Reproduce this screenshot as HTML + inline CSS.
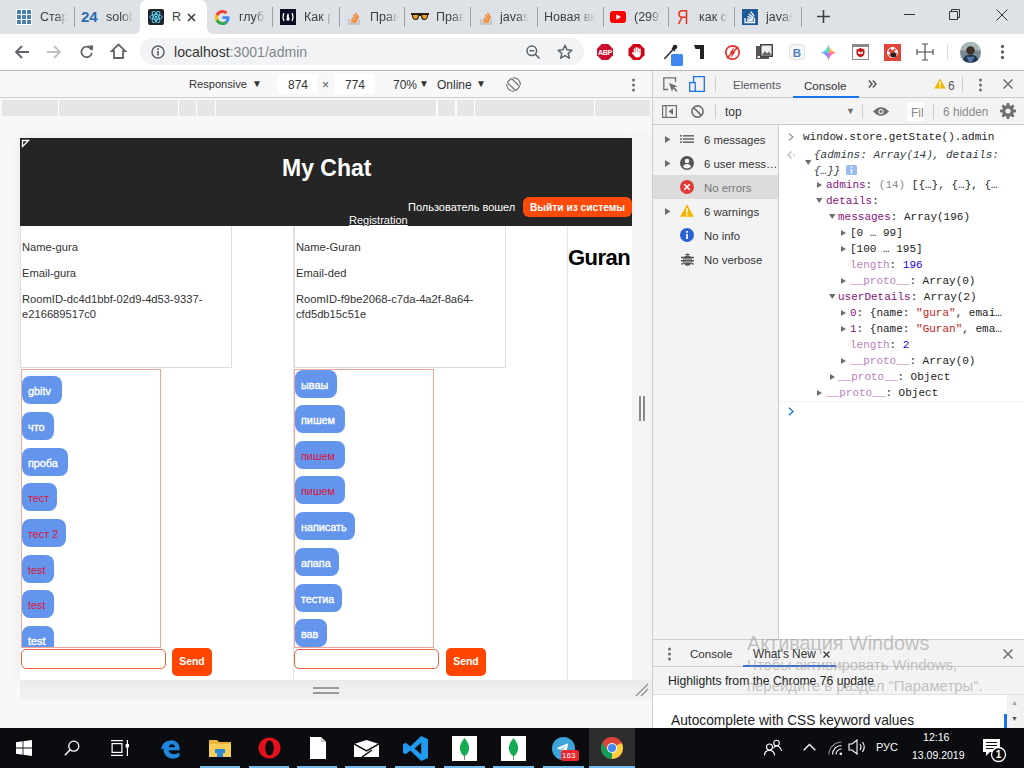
<!DOCTYPE html>
<html><head><meta charset="utf-8">
<style>
*{box-sizing:border-box;margin:0;padding:0}
html,body{width:1024px;height:768px;overflow:hidden;background:#fff;font-family:"Liberation Sans",sans-serif;font-size:12px;color:#333}
.a{position:absolute}
.t{position:absolute;white-space:nowrap;line-height:1}
.mono{font-family:"Liberation Mono",monospace}
/* tab strip */
#tabs{left:0;top:0;width:1024px;height:34px;background:#dee1e6}
.tsep{position:absolute;top:7px;width:1px;height:20px;background:#9aa0a6}
.ttl{position:absolute;top:11px;font-size:12.5px;color:#3c4043;white-space:nowrap;overflow:hidden;line-height:13px}
.fade{-webkit-mask-image:linear-gradient(to right,#000 60%,transparent)}

.bub{position:absolute;left:0;height:28px;background:#6495ed;border-radius:8px;color:#fff;font-size:10.8px;font-weight:normal;-webkit-text-stroke:0.35px #fff;line-height:30px;padding-left:6px;white-space:nowrap}
.bub.r{color:#dc143c;font-weight:normal;-webkit-text-stroke:0}
.send{position:absolute;width:40px;height:28px;background:#ff4500;border-radius:5px;color:#fff;font-size:10.4px;font-weight:bold;line-height:28px;text-align:center}

.sbi{position:absolute;left:653px;width:125px;height:14px;padding-left:51px;font-size:11.4px;color:#333;line-height:14px;white-space:nowrap}
.sbi .tri{position:absolute;left:11px;top:0;font-size:8px;color:#6e6e6e}
.cl{position:absolute;font-family:"Liberation Mono",monospace;font-size:11px;line-height:14px;white-space:nowrap;color:#222}
.ctri{position:absolute;font-size:8px;color:#6e6e6e;line-height:12px}
.pn{color:#881280}.pl{color:#bb7fbb}.nm{color:#1c00cf}.st{color:#c41a16}
</style></head><body>

<!-- ============ TAB STRIP ============ -->
<div id="tabs" class="a">
  <!-- tab1 grid -->
  <svg class="a" style="left:16px;top:9px" width="16" height="16" viewBox="0 0 16 16">
    <rect width="16" height="16" fill="#fff"/>
    <g fill="#4a7fb0">
    <rect x="1" y="1" width="4" height="4"/><rect x="6" y="1" width="4" height="4"/><rect x="11" y="1" width="4" height="4"/>
    <rect x="1" y="6" width="4" height="4"/><rect x="6" y="6" width="4" height="4"/><rect x="11" y="6" width="4" height="4"/>
    <rect x="1" y="11" width="4" height="4"/><rect x="6" y="11" width="4" height="4"/><rect x="11" y="11" width="4" height="4"/>
    </g>
  </svg>
  <div class="ttl fade" style="left:40px;width:27px">Стар</div>
  <div class="tsep" style="left:74px"></div>
  <div class="t" style="left:81px;top:9px;font-size:15px;font-weight:bold;color:#2a6db0">24</div>
  <div class="ttl fade" style="left:106px;width:27px">solob</div>
  <!-- active tab -->
  <div class="a" style="left:134px;top:28px;width:6px;height:6px;background:#fff"></div>
  <div class="a" style="left:134px;top:28px;width:6px;height:6px;background:#dee1e6;border-bottom-right-radius:6px"></div>
  <div class="a" style="left:207px;top:28px;width:6px;height:6px;background:#fff"></div>
  <div class="a" style="left:207px;top:28px;width:6px;height:6px;background:#dee1e6;border-bottom-left-radius:6px"></div>
  <div class="a" style="left:140px;top:0;width:67px;height:34px;background:#fff;border-radius:7px 7px 0 0"></div>
  <svg class="a" style="left:148px;top:9px" width="16" height="16" viewBox="0 0 16 16">
    <rect width="16" height="16" rx="2" fill="#20232a"/>
    <g fill="none" stroke="#61dafb" stroke-width="0.9">
      <ellipse cx="8" cy="8" rx="6.2" ry="2.4"/>
      <ellipse cx="8" cy="8" rx="6.2" ry="2.4" transform="rotate(60 8 8)"/>
      <ellipse cx="8" cy="8" rx="6.2" ry="2.4" transform="rotate(120 8 8)"/>
    </g>
    <circle cx="8" cy="8" r="1.3" fill="#61dafb"/>
  </svg>
  <div class="ttl" style="left:172px;width:10px">R</div>
  <svg class="a" style="left:187px;top:13px" width="9" height="9" viewBox="0 0 9 9"><path d="M1 1L8 8M8 1L1 8" stroke="#3c4043" stroke-width="1.6"/></svg>
  <!-- tab4 google -->
  <svg class="a" style="left:215px;top:10px" width="15" height="15" viewBox="0 0 16 16">
    <path d="M15.5 8.2c0-.6-.1-1.1-.2-1.6H8v3h4.2c-.2 1-.8 1.8-1.6 2.3v2h2.6c1.5-1.4 2.3-3.4 2.3-5.7z" fill="#4285f4"/>
    <path d="M8 16c2.2 0 4-.7 5.3-2l-2.6-2c-.7.5-1.6.8-2.7.8-2.1 0-3.9-1.4-4.5-3.3H.8v2.1C2.1 14.2 4.8 16 8 16z" fill="#34a853"/>
    <path d="M3.5 9.5C3.3 9 3.2 8.5 3.2 8s.1-1 .3-1.5V4.4H.8C.3 5.5 0 6.7 0 8s.3 2.5.8 3.6l2.7-2.1z" fill="#fbbc05"/>
    <path d="M8 3.2c1.2 0 2.2.4 3.1 1.2l2.3-2.3C12 .8 10.2 0 8 0 4.8 0 2.1 1.8.8 4.4l2.7 2.1C4.1 4.6 5.9 3.2 8 3.2z" fill="#ea4335"/>
  </svg>
  <div class="ttl fade" style="left:239px;width:26px">глуб</div>
  <div class="tsep" style="left:272px"></div>
  <!-- tab5 freecodecamp -->
  <svg class="a" style="left:280px;top:9px" width="16" height="16" viewBox="0 0 16 16">
    <rect width="16" height="16" fill="#0a0a23"/>
    <path d="M4 4Q2 8 4 12M12 4Q14 8 12 12" stroke="#fff" stroke-width="1.2" fill="none"/>
    <path d="M8 4Q6 7 7 9Q6 9 6.5 11Q8 12.5 9.5 11Q10 9 8.8 8Q9.5 6 8 4z" fill="#fff"/>
  </svg>
  <div class="ttl fade" style="left:304px;width:28px">Как р</div>
  <div class="tsep" style="left:339px"></div>
  <!-- tab6 SO -->
  <svg class="a" style="left:347px;top:9px" width="15" height="16" viewBox="0 0 15 16">
    <path d="M2 10v5h10v-5" stroke="#bcbbbb" stroke-width="1.4" fill="none"/>
    <g stroke="#f48024" stroke-width="1.4"><path d="M4 13h6"/><path d="M4.2 10.8l5.9 1.1"/><path d="M5 8.3l5.4 2.4"/><path d="M6.4 5.9l4.6 3.7"/><path d="M8.4 3.8l3.4 4.8"/></g>
  </svg>
  <div class="ttl fade" style="left:370px;width:28px">Прав</div>
  <div class="tsep" style="left:404px"></div>
  <!-- tab7 glasses -->
  <svg class="a" style="left:411px;top:12px" width="18" height="10" viewBox="0 0 18 10">
    <path d="M0 1h18v2h-1c0 4-2 5-4 5s-3-2-3-4H8c0 2-1 4-3 4S1 7 1 3H0z" fill="#2a2010"/>
    <path d="M2 3h5c0 3-1 4-2.5 4S2 5 2 3zM11 3h5c0 3-1 4-2.5 4S11 5 11 3z" fill="#e8a020"/>
  </svg>
  <div class="ttl fade" style="left:436px;width:28px">Прав</div>
  <div class="tsep" style="left:470px"></div>
  <!-- tab8 SO -->
  <svg class="a" style="left:479px;top:9px" width="15" height="16" viewBox="0 0 15 16">
    <path d="M2 10v5h10v-5" stroke="#bcbbbb" stroke-width="1.4" fill="none"/>
    <g stroke="#f48024" stroke-width="1.4"><path d="M4 13h6"/><path d="M4.2 10.8l5.9 1.1"/><path d="M5 8.3l5.4 2.4"/><path d="M6.4 5.9l4.6 3.7"/><path d="M8.4 3.8l3.4 4.8"/></g>
  </svg>
  <div class="ttl fade" style="left:500px;width:29px">javas</div>
  <div class="tsep" style="left:537px"></div>
  <div class="ttl fade" style="left:544px;width:52px">Новая вкл</div>
  <div class="tsep" style="left:603px"></div>
  <!-- youtube -->
  <svg class="a" style="left:610px;top:11px" width="16" height="12" viewBox="0 0 16 12">
    <rect width="16" height="12" rx="3" fill="#f00"/><path d="M6.3 3.2v5.6L11 6z" fill="#fff"/>
  </svg>
  <div class="ttl fade" style="left:634px;width:27px">(299)</div>
  <div class="tsep" style="left:668px"></div>
  <div class="t" style="left:677px;top:7px;font-size:20px;color:#e8321a;transform:scaleX(.8);transform-origin:left top">Я</div>
  <div class="ttl fade" style="left:699px;width:29px">как с</div>
  <div class="tsep" style="left:734px"></div>
  <!-- SO blue -->
  <svg class="a" style="left:742px;top:9px" width="16" height="16" viewBox="0 0 16 16"><rect width="16" height="16" fill="#1e5a96"/><path d="M3 9v4.5h9.5V9" stroke="#fff" stroke-width="1.3" fill="none"/><g stroke="#fff" stroke-width="1.3"><path d="M4.8 11.8h6"/><path d="M5 9.8l5.8 1"/><path d="M5.6 7.4l5.4 2.4"/><path d="M6.8 4.9l4.7 3.8"/><path d="M8.8 2.6l3.4 4.8"/></g></svg>
  <div class="ttl fade" style="left:766px;width:27px">javas</div>
  <div class="tsep" style="left:801px"></div>
  <svg class="a" style="left:817px;top:10px" width="13" height="13" viewBox="0 0 13 13"><path d="M6.5 0v13M0 6.5h13" stroke="#3c4043" stroke-width="1.6"/></svg>
  <!-- window controls -->
  <div class="a" style="left:904px;top:14px;width:11px;height:1px;background:#333"></div>
  <svg class="a" style="left:949px;top:9px" width="11" height="11" viewBox="0 0 11 11"><path d="M.5 2.5h8v8h-8zM2.5 2.5v-2h8v8h-2" stroke="#333" fill="none"/></svg>
  <svg class="a" style="left:996px;top:9px" width="12" height="12" viewBox="0 0 12 12"><path d="M.5 .5l11 11M11.5 .5l-11 11" stroke="#333" stroke-width="1"/></svg>
</div>

<!-- ============ TOOLBAR ============ -->
<div class="a" style="left:0;top:34px;width:1024px;height:36px;background:#fff"></div>
<div class="a" style="left:0;top:70px;width:1024px;height:1px;background:#b8b8b8"></div>

<!-- back -->
<svg class="a" style="left:15px;top:45px" width="14" height="14" viewBox="0 0 14 14"><path d="M7 1L1 7l6 6M1 7h13" stroke="#5f6368" stroke-width="1.8" fill="none"/></svg>
<svg class="a" style="left:47px;top:45px" width="14" height="14" viewBox="0 0 14 14"><path d="M7 1l6 6-6 6M13 7H0" stroke="#bdc1c6" stroke-width="1.8" fill="none"/></svg>
<svg class="a" style="left:79px;top:44px" width="15" height="15" viewBox="0 0 16 16"><path d="M13.2 6.2A5.6 5.6 0 1 0 13.6 9.5" stroke="#5f6368" stroke-width="1.9" fill="none"/><path d="M9.5 1.5L15 1.5 15 7z" fill="#5f6368"/></svg>
<svg class="a" style="left:110px;top:43px" width="17" height="16" viewBox="0 0 17 16"><path d="M8.5 1.5L1.5 8.2H4V15h9V8.2h2.5z" stroke="#5f6368" stroke-width="1.8" fill="none" stroke-linejoin="miter"/></svg>
<!-- omnibox -->
<div class="a" style="left:140px;top:38px;width:444px;height:27px;border-radius:13.5px;background:#f1f3f4"></div>
<svg class="a" style="left:151px;top:45px" width="14" height="14" viewBox="0 0 14 14"><circle cx="7" cy="7" r="6" stroke="#5f6368" stroke-width="1.5" fill="none"/><rect x="6.2" y="6" width="1.7" height="4.5" fill="#5f6368"/><rect x="6.2" y="3.3" width="1.7" height="1.7" fill="#5f6368"/></svg>
<div class="t" style="left:174px;top:45px;font-size:14.1px;color:#333">localhost<span style="color:#80868b">:3001/admin</span></div>
<svg class="a" style="left:526px;top:45px" width="14" height="14" viewBox="0 0 14 14"><circle cx="5.8" cy="5.8" r="4.8" stroke="#5f6368" stroke-width="1.5" fill="none"/><path d="M3.5 5.8h4.6M9.3 9.3L13.5 13.5" stroke="#5f6368" stroke-width="1.5"/></svg>
<svg class="a" style="left:557px;top:44px" width="16" height="15" viewBox="0 0 16 15"><path d="M8 1.3l2 4.5 4.9.4-3.7 3.2 1.1 4.8L8 11.7l-4.3 2.5 1.1-4.8L1.1 6.2 6 5.8z" stroke="#5f6368" stroke-width="1.5" fill="none" stroke-linejoin="round"/></svg>
<!-- extensions -->
<svg class="a" style="left:597px;top:44px" width="16" height="16" viewBox="0 0 16 16"><path d="M4.7 0h6.6L16 4.7v6.6L11.3 16H4.7L0 11.3V4.7z" fill="#c8102e"/><text x="8" y="10.8" font-size="7" font-weight="bold" fill="#fff" text-anchor="middle" font-family="Liberation Sans" letter-spacing="-0.3">ABP</text></svg>
<svg class="a" style="left:628px;top:44px" width="17" height="16" viewBox="0 0 16 16"><path d="M4.7 0h6.6L16 4.7v6.6L11.3 16H4.7L0 11.3V4.7z" fill="#d0021b"/><g fill="#fff"><rect x="5.3" y="4.2" width="1.5" height="6" rx=".75"/><rect x="7.1" y="3" width="1.5" height="7" rx=".75"/><rect x="8.9" y="3.4" width="1.5" height="6.6" rx=".75"/><rect x="10.7" y="4.6" width="1.5" height="5.6" rx=".75"/><path d="M5.3 8.5h6.9v1.8q0 3-3.3 3.3-2 0-3-1.6L3.4 9.2q-.3-.8.5-1 .6-.1 1 .4l.4.6z"/></g></svg>
<svg class="a" style="left:662px;top:43px" width="22" height="23" viewBox="0 0 22 23"><path d="M2.8 15.5L11 6.5" stroke="#333" stroke-width="1.6" stroke-linecap="round"/><path d="M9.5 5.5l3 3 1.2-1.2-3-3z" fill="#222"/><circle cx="13" cy="4" r="2.3" fill="#222"/><rect x="9" y="11" width="12" height="12" rx="1.5" fill="#3f86f0"/></svg>
<svg class="a" style="left:694px;top:45px" width="11" height="14" viewBox="0 0 11 14"><path d="M0 0h10v14H6V4H1.5z" fill="#222"/></svg>
<svg class="a" style="left:724px;top:44px" width="17" height="17" viewBox="0 0 16 16"><circle cx="8" cy="8" r="6.3" stroke="#e0302a" stroke-width="1.6" fill="none"/><path d="M9.6 2.5L5.3 8.6h2.4L6.3 13.5l4.5-6.2H8.3z" fill="#e0302a"/><path d="M2.5 13.5L13.5 2.5" stroke="#e0302a" stroke-width="1.4"/></svg>
<svg class="a" style="left:756px;top:44px" width="17" height="17" viewBox="0 0 17 17"><rect x="0" y="2" width="13" height="13" fill="#555"/><rect x="4" y="0" width="13" height="13" fill="#444"/><rect x="5.5" y="1.5" width="10" height="10" fill="#eee"/><path d="M5.5 11.5L9 7l2 2.5 2-2 2.5 4z" fill="#666"/><rect x="1.5" y="12" width="2.5" height="2" fill="#eee"/></svg>
<svg class="a" style="left:789px;top:44px" width="16" height="16" viewBox="0 0 16 16"><rect x="0.5" y="0.5" width="15" height="15" rx="2.5" fill="#f4f6f9" stroke="#dfe3ea"/><text x="8" y="12.6" font-size="11.5" font-weight="bold" fill="#5181b8" text-anchor="middle" font-family="Liberation Sans">B</text></svg>
<svg class="a" style="left:820px;top:44px" width="17" height="17" viewBox="0 0 17 17"><path d="M8.5 .5Q9.8 6.5 8.5 8.5 7.2 6.5 8.5 .5z" fill="#ffd23f"/><path d="M8.5 .5Q10 7 16.5 8.5 10.5 9.5 8.5 8.5z" fill="#ffb347"/><path d="M16.5 8.5Q10 10 8.5 16.5 7.5 10.5 8.5 8.5z" fill="#ff6fb5"/><path d="M8.5 16.5Q7 10 .5 8.5 6.5 7.5 8.5 8.5z" fill="#7a8cff"/><path d="M.5 8.5Q7 7 8.5 .5 9.5 6.5 8.5 8.5z" fill="#4fd8e8"/></svg>
<svg class="a" style="left:852px;top:44px" width="17" height="16" viewBox="0 0 17 16"><rect x="0.5" y="0.5" width="16" height="15" fill="#fafafa" stroke="#8a8a8a"/><rect x="1" y="1" width="15" height="2" fill="#8a8a8a"/><path d="M4.5 5.5l4 -1.5 4 1.5v3.3q0 3-4 4.5-4-1.5-4-4.5z" fill="#c01818"/><path d="M6.3 6.8l2.2 2 2.2-2v3.2h-4.4z" fill="#fff"/></svg>
<svg class="a" style="left:884px;top:44px" width="17" height="17" viewBox="0 0 17 17"><rect width="17" height="17" fill="#e0453a"/><circle cx="8.5" cy="8.5" r="5" stroke="#fff" stroke-width="1" fill="none"/><circle cx="8.5" cy="4.5" r="1.6" fill="#fff"/><circle cx="4.5" cy="9" r="1.6" fill="#fff"/><circle cx="12" cy="7.5" r="1.6" fill="#fff"/><ellipse cx="9.5" cy="11" rx="2.8" ry="2.5" fill="#222"/></svg>
<svg class="a" style="left:916px;top:43px" width="18" height="18" viewBox="0 0 18 18"><path d="M9 1v16M1 9h16M6 1h6M6 17h6M1 6v6M17 6v6" stroke="#444" stroke-width="1.1" fill="none"/></svg>
<div class="a" style="left:947px;top:44px;width:1px;height:16px;background:#dadce0"></div>
<svg class="a" style="left:960px;top:42px" width="21" height="21" viewBox="0 0 20 20"><defs><clipPath id="avc"><circle cx="10" cy="10" r="10"/></clipPath></defs><g clip-path="url(#avc)"><rect width="20" height="20" fill="#7a8a90"/><rect y="0" width="20" height="8" fill="#a9b8b8"/><circle cx="10" cy="8" r="4" fill="#3a3028"/><path d="M2 20q1-8 8-8t8 8z" fill="#22344a"/><path d="M6 14l3 6h2l3-6" fill="#5078a8"/></g></svg>
<svg class="a" style="left:1000px;top:44px" width="5" height="16" viewBox="0 0 5 16"><circle cx="2.5" cy="2.5" r="1.7" fill="#5f6368"/><circle cx="2.5" cy="8" r="1.7" fill="#5f6368"/><circle cx="2.5" cy="13.5" r="1.7" fill="#5f6368"/></svg>


<!-- ============ DEVICE TOOLBAR + VIEWPORT ============ -->
<div class="a" style="left:0;top:71px;width:652px;height:657px;background:#f8f8f8"></div>
<div class="a" style="left:0;top:71px;width:652px;height:26px;background:#f8f8f8"></div>
<div class="a" style="left:0;top:97px;width:652px;height:1px;background:#cdcdcd"></div>
<div class="t" style="left:189px;top:79px;font-size:11.1px;color:#333">Responsive</div>
<div class="t" style="left:252px;top:79px;font-size:10px;color:#333">▼</div>
<div class="a" style="left:277px;top:74px;width:40px;height:20px;background:#fff"></div>
<div class="t" style="left:288px;top:79px;font-size:12px;color:#333">874</div>
<div class="t" style="left:322px;top:79px;font-size:12px;color:#555">×</div>
<div class="a" style="left:335px;top:74px;width:40px;height:20px;background:#fff"></div>
<div class="t" style="left:345px;top:79px;font-size:12px;color:#333">774</div>
<div class="t" style="left:393px;top:79px;font-size:12px;color:#333">70%</div>
<div class="t" style="left:419px;top:79px;font-size:10px;color:#333">▼</div>
<div class="t" style="left:437px;top:79px;font-size:12px;color:#333">Online</div>
<div class="t" style="left:476px;top:79px;font-size:10px;color:#333">▼</div>
<svg class="a" style="left:505.5px;top:76.5px" width="15" height="15" viewBox="0 0 15 15"><g transform="rotate(-45 7.5 7.5)"><rect x="4.6" y="1.6" width="5.8" height="11.8" rx="1" stroke="#6e6e6e" stroke-width="1.2" fill="none"/></g><path d="M6.9 .73A6.8 6.8 0 0 1 14.27 8.09M8.09 14.27A6.8 6.8 0 0 1 .73 6.9" stroke="#6e6e6e" stroke-width="1.1" fill="none"/></svg>
<svg class="a" style="left:631px;top:78px" width="5" height="14" viewBox="0 0 5 14"><circle cx="2.5" cy="2" r="1.5" fill="#6e6e6e"/><circle cx="2.5" cy="7" r="1.5" fill="#6e6e6e"/><circle cx="2.5" cy="12" r="1.5" fill="#6e6e6e"/></svg>
<!-- media query bars -->
<div class="a" style="left:2px;top:100px;width:648px;height:16px;background:#e6e6e6"></div>
<div class="a" style="left:57.5px;top:100px;width:1.5px;height:16px;background:#fcfcfc"></div>
<div class="a" style="left:177.5px;top:100px;width:1.5px;height:16px;background:#fcfcfc"></div>
<div class="a" style="left:195.5px;top:100px;width:1.5px;height:16px;background:#fcfcfc"></div>
<div class="a" style="left:214.5px;top:100px;width:1.5px;height:16px;background:#fcfcfc"></div>
<div class="a" style="left:436px;top:100px;width:1.5px;height:16px;background:#fcfcfc"></div>
<div class="a" style="left:455px;top:100px;width:1.5px;height:16px;background:#fcfcfc"></div>
<div class="a" style="left:473.5px;top:100px;width:1.5px;height:16px;background:#fcfcfc"></div>
<div class="a" style="left:593.5px;top:100px;width:1.5px;height:16px;background:#fcfcfc"></div>
<!-- shadow around page -->
<div class="a" style="left:20px;top:138px;width:612px;height:542px;box-shadow:0 0 14px rgba(0,0,0,0.06)"></div>
<!-- bottom resizer bar -->
<div class="a" style="left:20px;top:680px;width:632px;height:20px;background:linear-gradient(#ebebeb,#f3f3f3)"></div>
<div class="a" style="left:313px;top:687px;width:26px;height:2px;background:#9a9a9a"></div>
<div class="a" style="left:313px;top:692px;width:26px;height:2px;background:#9a9a9a"></div>
<svg class="a" style="left:635px;top:683px" width="14" height="14" viewBox="0 0 14 14"><path d="M1 13L13 1M6 13L13 6" stroke="#9a9a9a" stroke-width="1.6"/></svg>
<div class="a" style="left:632px;top:130px;width:20px;height:550px;background:#f4f4f4"></div>
<div class="a" style="left:639px;top:396px;width:2px;height:25px;background:#8a8a8a"></div>
<div class="a" style="left:643px;top:396px;width:2px;height:25px;background:#8a8a8a"></div>

<!-- ============ PAGE ============ -->
<div class="a" style="left:20px;top:138px;width:612px;height:542px;background:#fff;overflow:hidden">
  <div class="a" style="left:0;top:0;width:612px;height:88px;background:#252525"></div>
  <svg class="a" style="left:1px;top:1px" width="9" height="9" viewBox="0 0 9 9"><path d="M1.5 1.5h6l-6 6z" stroke="#fff" stroke-width="1.3" fill="#222"/></svg>
  <div class="t" style="left:262px;top:19px;font-size:23px;font-weight:bold;color:#fff">My Chat</div>
  <div class="t" style="left:388px;top:64px;font-size:11px;color:#fff">Пользователь вошел</div>
  <div class="a" style="left:503px;top:59px;width:109px;height:20px;background:#fc4a0a;border-radius:6px"></div>
  <div class="t" style="left:510px;top:64.5px;font-size:10.2px;color:#fff;font-weight:bold">Выйти из системы</div>
  <div class="t" style="left:329px;top:77px;font-size:11px;color:#fff;text-decoration:underline">Registration</div>
  <!-- col 1 info -->
  <div class="a" style="left:0;top:88px;width:212px;height:142px;border:1px solid #ddd;border-top:none"></div>
  <div class="t" style="left:2px;top:104px;font-size:11.2px;color:#333">Name-gura</div>
  <div class="t" style="left:2px;top:130px;font-size:11.2px;color:#333">Email-gura</div>
  <div class="t" style="left:2px;top:156px;font-size:11.2px;color:#333">RoomID-dc4d1bbf-02d9-4d53-9337-</div>
  <div class="t" style="left:2px;top:171px;font-size:11.2px;color:#333">e216689517c0</div>
  <!-- col 2 info -->
  <div class="a" style="left:274px;top:88px;width:212px;height:142px;border:1px solid #ddd;border-top:none"></div>
  <div class="a" style="left:273px;top:88px;width:1px;height:454px;background:#e4e4e4"></div>
  <div class="t" style="left:276px;top:104px;font-size:11.2px;color:#333">Name-Guran</div>
  <div class="t" style="left:276px;top:130px;font-size:11.2px;color:#333">Email-ded</div>
  <div class="t" style="left:276px;top:156px;font-size:11.2px;color:#333">RoomID-f9be2068-c7da-4a2f-8a64-</div>
  <div class="t" style="left:276px;top:171px;font-size:11.2px;color:#333">cfd5db15c51e</div>
  <!-- col 3 -->
  <div class="a" style="left:547px;top:88px;width:1px;height:454px;background:#e4e4e4"></div>
  <div class="t" style="left:548px;top:109px;font-size:22px;font-weight:bold;color:#000;letter-spacing:-0.55px">Guran</div>
  <!-- messages col 1 -->
  <div class="a" style="left:1px;top:231px;width:140px;height:279px;border:1px solid #f0a49a;overflow:hidden">
    <div class="bub" style="top:6px;width:40px">gbitv</div>
    <div class="bub" style="top:42px;width:32px">что</div>
    <div class="bub" style="top:78px;width:46px">проба</div>
    <div class="bub r" style="top:113px;width:35px">тест</div>
    <div class="bub r" style="top:149px;width:44px">тест 2</div>
    <div class="bub r" style="top:185px;width:32px">test</div>
    <div class="bub r" style="top:220px;width:32px">test</div>
    <div class="bub" style="top:256px;width:32px">test</div>
  </div>
  <div class="a" style="left:1px;top:511px;width:145px;height:20px;border:1px solid #e8643a;border-radius:5px;background:#fff"></div>
  <div class="send" style="left:152px;top:510px">Send</div>
  <!-- messages col 2 -->
  <div class="a" style="left:274px;top:231px;width:140px;height:279px;border:1px solid #f0a49a;overflow:hidden">
    <div class="bub" style="top:0px;width:42px">ывaы</div>
    <div class="bub" style="top:35px;width:50px">пишем</div>
    <div class="bub r" style="top:71px;width:50px">пишем</div>
    <div class="bub r" style="top:106px;width:50px">пишем</div>
    <div class="bub" style="top:142px;width:60px">написать</div>
    <div class="bub" style="top:178px;width:44px">апапа</div>
    <div class="bub" style="top:214px;width:47px">тестиа</div>
    <div class="bub" style="top:249px;width:32px">вав</div>
  </div>
  <div class="a" style="left:274px;top:511px;width:145px;height:20px;border:1px solid #e8643a;border-radius:5px;background:#fff"></div>
  <div class="send" style="left:426px;top:510px">Send</div>
</div>

<!-- ============ DEVTOOLS ============ -->
<div class="a" style="left:652px;top:71px;width:1px;height:657px;background:#cdcdcd"></div>
<div class="a" style="left:653px;top:71px;width:371px;height:657px;background:#fff"></div>
<div class="a" style="left:653px;top:71px;width:371px;height:26px;background:#f3f3f3"></div>
<div class="a" style="left:653px;top:97px;width:371px;height:1px;background:#cdcdcd"></div>
<svg class="a" style="left:663px;top:77px" width="15" height="15" viewBox="0 0 15 15"><path d="M5 12.5H.8V.8h11.7V5" stroke="#6e6e6e" stroke-width="1.3" fill="none"/><path d="M6 6l8.5 3.2-3.3 1.1 3.3 3.3-1.1 1.1-3.3-3.3-1.1 3.3z" fill="#6e6e6e"/></svg>
<svg class="a" style="left:689px;top:76px" width="16" height="16" viewBox="0 0 16 16"><path d="M4.6 6V.7h10.7v14.6H6" stroke="#1a73e8" stroke-width="1.3" fill="none"/><rect x=".7" y="6.6" width="5.5" height="8.7" stroke="#1a73e8" stroke-width="1.3" fill="none"/></svg>
<div class="a" style="left:715px;top:77px;width:1px;height:15px;background:#ccc"></div>
<div class="t" style="left:733px;top:80px;font-size:11.5px;color:#5a5a5a">Elements</div>
<div class="t" style="left:804px;top:80px;font-size:11.6px;color:#333">Console</div>
<div class="a" style="left:793px;top:96px;width:66px;height:2px;background:#1a73e8"></div>
<svg class="a" style="left:868px;top:80px" width="9" height="8" viewBox="0 0 9 8"><path d="M.8 .6L4 4 .8 7.4M4.8 .6L8 4 4.8 7.4" stroke="#555" stroke-width="1.5" fill="none"/></svg>
<svg class="a" style="left:934px;top:78px" width="12" height="11" viewBox="0 0 12 11"><path d="M6 .5L11.7 10.5H.3z" fill="#f2b600"/><rect x="5.3" y="3.6" width="1.4" height="4" fill="#fff"/><rect x="5.3" y="8.3" width="1.4" height="1.3" fill="#fff"/></svg>
<div class="t" style="left:948px;top:80px;font-size:12px;color:#555">6</div>
<div class="a" style="left:962px;top:77px;width:1px;height:15px;background:#ccc"></div>
<svg class="a" style="left:978px;top:78px" width="5" height="14" viewBox="0 0 5 14"><circle cx="2.5" cy="2" r="1.5" fill="#6e6e6e"/><circle cx="2.5" cy="7" r="1.5" fill="#6e6e6e"/><circle cx="2.5" cy="12" r="1.5" fill="#6e6e6e"/></svg>
<svg class="a" style="left:1003px;top:79px" width="10" height="10" viewBox="0 0 10 10"><path d="M.5 .5l9 9M9.5 .5l-9 9" stroke="#6e6e6e" stroke-width="1.5"/></svg>
<!-- console toolbar -->
<div class="a" style="left:653px;top:98px;width:371px;height:26px;background:#f3f3f3"></div>
<div class="a" style="left:653px;top:124px;width:371px;height:1px;background:#cdcdcd"></div>
<svg class="a" style="left:662px;top:105px" width="15" height="13" viewBox="0 0 15 13"><rect x=".6" y=".6" width="13.8" height="11.8" stroke="#6e6e6e" stroke-width="1.2" fill="none"/><path d="M4 .6v11.8" stroke="#6e6e6e" stroke-width="1.2"/><path d="M11 3.2v6.6L6.6 6.5z" fill="#6e6e6e"/></svg>
<svg class="a" style="left:691px;top:105px" width="13" height="13" viewBox="0 0 13 13"><circle cx="6.5" cy="6.5" r="5.6" stroke="#6e6e6e" stroke-width="1.6" fill="none"/><path d="M2.6 2.6l7.8 7.8" stroke="#6e6e6e" stroke-width="1.6"/></svg>
<div class="a" style="left:715px;top:104px;width:1px;height:15px;background:#ccc"></div>
<div class="t" style="left:725px;top:106px;font-size:12px;color:#333">top</div>
<div class="t" style="left:846px;top:107px;font-size:9px;color:#6e6e6e">▼</div>
<div class="a" style="left:862px;top:104px;width:1px;height:15px;background:#ccc"></div>
<svg class="a" style="left:872px;top:106px" width="18" height="11" viewBox="0 0 18 11"><path d="M1 5.5Q9 -3 17 5.5Q9 14 1 5.5z" fill="#6e6e6e"/><circle cx="9" cy="5.5" r="2.6" fill="#f3f3f3"/><circle cx="9" cy="5.5" r="1.5" fill="#6e6e6e"/></svg>
<div class="a" style="left:907px;top:102px;width:17px;height:19px;background:#fff"></div>
<div class="t" style="left:911px;top:107px;font-size:12px;color:#888;width:13px;overflow:hidden">Fil</div>
<div class="a" style="left:933px;top:104px;width:1px;height:15px;background:#ccc"></div>
<div class="t" style="left:943px;top:107px;font-size:11.85px;color:#8a8a8a">6 hidden</div>
<svg class="a" style="left:1000px;top:103px" width="16" height="16" viewBox="0 0 16 16"><path d="M6.8 0h2.4l.4 2.3 1.3.6 1.9-1.4 1.7 1.7-1.4 1.9.6 1.3 2.3.4v2.4l-2.3.4-.6 1.3 1.4 1.9-1.7 1.7-1.9-1.4-1.3.6-.4 2.3H6.8l-.4-2.3-1.3-.6-1.9 1.4-1.7-1.7 1.4-1.9-.6-1.3L0 9.2V6.8l2.3-.4.6-1.3-1.4-1.9 1.7-1.7 1.9 1.4 1.3-.6z" fill="#6e6e6e"/><circle cx="8" cy="8" r="2.6" fill="#f3f3f3"/></svg>
<!-- sidebar -->
<div class="a" style="left:653px;top:125px;width:125px;height:514px;background:#f3f3f3"></div>
<div class="a" style="left:778px;top:125px;width:1px;height:514px;background:#cdcdcd"></div>
<div class="a" style="left:653px;top:175px;width:125px;height:24px;background:#dcdcdc"></div>
<svg class="a" style="left:665px;top:135.5px" width="5.5" height="7" viewBox="0 0 5.5 7"><path d="M0 0L5.5 3.5 0 7z" fill="#6e6e6e"/></svg>
<svg class="a" style="left:665px;top:159.5px" width="5.5" height="7" viewBox="0 0 5.5 7"><path d="M0 0L5.5 3.5 0 7z" fill="#6e6e6e"/></svg>
<svg class="a" style="left:665px;top:207.5px" width="5.5" height="7" viewBox="0 0 5.5 7"><path d="M0 0L5.5 3.5 0 7z" fill="#6e6e6e"/></svg>
<div class="sbi" style="top:133px">6 messages</div>
<div class="sbi" style="top:157px">6 user mess…</div>
<div class="sbi" style="top:181px;color:#777">No errors</div>
<div class="sbi" style="top:205px">6 warnings</div>
<div class="sbi" style="top:229px">No info</div>
<div class="sbi" style="top:253px">No verbose</div>
<svg class="a" style="left:680px;top:135px" width="14" height="8" viewBox="0 0 14 8"><g fill="#6e6e6e"><rect x="0" y="0" width="2" height="1.6"/><rect x="3" y="0" width="11" height="1.6"/><rect x="0" y="3.2" width="2" height="1.6"/><rect x="3" y="3.2" width="11" height="1.6"/><rect x="0" y="6.4" width="2" height="1.6"/><rect x="3" y="6.4" width="11" height="1.6"/></g></svg>
<svg class="a" style="left:680px;top:156px" width="14" height="14" viewBox="0 0 14 14"><circle cx="7" cy="7" r="7" fill="#555"/><circle cx="7" cy="5" r="2.3" fill="#f3f3f3"/><path d="M2.8 10.5q1.4-2.4 4.2-2.4t4.2 2.4q-1.6 1.9-4.2 1.9t-4.2-1.9z" fill="#f3f3f3"/></svg>
<svg class="a" style="left:680px;top:180px" width="14" height="14" viewBox="0 0 14 14"><circle cx="7" cy="7" r="7" fill="#e03b3b"/><path d="M4.3 4.3l5.4 5.4M9.7 4.3l-5.4 5.4" stroke="#fff" stroke-width="1.5"/></svg>
<svg class="a" style="left:680px;top:204px" width="14" height="13" viewBox="0 0 14 13"><path d="M7 .3L13.8 12.7H.2z" fill="#f2b600"/><rect x="6.2" y="4.3" width="1.6" height="4.5" fill="#fff"/><rect x="6.2" y="9.8" width="1.6" height="1.5" fill="#fff"/></svg>
<svg class="a" style="left:680px;top:228px" width="14" height="14" viewBox="0 0 14 14"><circle cx="7" cy="7" r="7" fill="#2a62d3"/><rect x="6.1" y="6" width="1.8" height="5" fill="#fff"/><rect x="6.1" y="3" width="1.8" height="1.8" fill="#fff"/></svg>
<svg class="a" style="left:680.5px;top:252px" width="13" height="14" viewBox="0 0 13 14"><g stroke="#555" stroke-width="1.4"><path d="M0 5.5h13M0 8.8h13M.5 12.3l2-1.2M12.5 12.3l-2-1.2"/></g><path d="M3.6 3Q6.5 0 9.4 3z" fill="#555"/><ellipse cx="6.5" cy="8.5" rx="4.4" ry="5.3" fill="#555"/><path d="M3 7.2h7M3 10h7" stroke="#f3f3f3" stroke-width=".8"/></svg>
<!-- console output -->
<div class="a" style="left:779px;top:125px;width:245px;height:514px;background:#fff"></div>
<div class="a" style="left:779px;top:401px;width:245px;height:1px;background:#f0f0f0"></div>
<svg class="a" style="left:788px;top:133px" width="6" height="8" viewBox="0 0 6 8"><path d="M1 .5l4 3.5-4 3.5" stroke="#909090" stroke-width="1.1" fill="none"/></svg>
<div class="cl" style="left:803px;top:130px;color:#222">window.store.getState().admin</div>
<svg class="a" style="left:787px;top:151px" width="9" height="8" viewBox="0 0 9 8"><path d="M4.5 .5L1 4l3.5 3.5" stroke="#b0b0b0" stroke-width="1.1" fill="none"/><circle cx="7" cy="4" r=".8" fill="#b0b0b0"/></svg>
<svg class="a" style="left:804.5px;top:160.0px" width="6.5" height="5" viewBox="0 0 6.5 5"><path d="M0 0H6.5L3.25 5z" fill="#6e6e6e"/></svg>
<div class="cl" style="left:814px;top:148px;color:#303942;font-style:italic">{admins: Array(14), details:</div>
<div class="cl" style="left:814px;top:164px;color:#303942;font-style:italic">{…}}</div>
<svg class="a" style="left:846px;top:165px" width="11" height="10" viewBox="0 0 11 10"><rect width="11" height="10" rx="1.5" fill="#9bbcf0"/><rect x="4.8" y="4" width="1.4" height="4.5" fill="#fff"/><rect x="4.8" y="1.6" width="1.4" height="1.4" fill="#fff"/></svg>
<svg class="a" style="left:817px;top:181.5px" width="5" height="6" viewBox="0 0 5 6"><path d="M0 0L5 3 0 6z" fill="#6e6e6e"/></svg>
<div class="cl" style="left:826px;top:178px"><span class="pn">admins</span>: <span style="color:#888">(14)</span> [{…}, {…}, {…</div>
<svg class="a" style="left:816px;top:198.0px" width="6.5" height="5" viewBox="0 0 6.5 5"><path d="M0 0H6.5L3.25 5z" fill="#6e6e6e"/></svg>
<div class="cl" style="left:826px;top:194px"><span class="pn">details</span>:</div>
<svg class="a" style="left:828.8px;top:214.0px" width="6.5" height="5" viewBox="0 0 6.5 5"><path d="M0 0H6.5L3.25 5z" fill="#6e6e6e"/></svg>
<div class="cl" style="left:838px;top:210px"><span class="pn">messages</span>: Array(196)</div>
<svg class="a" style="left:841.4px;top:229.5px" width="5" height="6" viewBox="0 0 5 6"><path d="M0 0L5 3 0 6z" fill="#6e6e6e"/></svg>
<div class="cl" style="left:850px;top:226px">[0 … 99]</div>
<svg class="a" style="left:841.4px;top:245.5px" width="5" height="6" viewBox="0 0 5 6"><path d="M0 0L5 3 0 6z" fill="#6e6e6e"/></svg>
<div class="cl" style="left:850px;top:242px">[100 … 195]</div>
<div class="cl" style="left:850px;top:258px"><span class="pl">length</span>: <span class="nm">196</span></div>
<svg class="a" style="left:841.4px;top:277.5px" width="5" height="6" viewBox="0 0 5 6"><path d="M0 0L5 3 0 6z" fill="#6e6e6e"/></svg>
<div class="cl" style="left:850px;top:274px"><span class="pl">__proto__</span>: Array(0)</div>
<svg class="a" style="left:828.8px;top:294.0px" width="6.5" height="5" viewBox="0 0 6.5 5"><path d="M0 0H6.5L3.25 5z" fill="#6e6e6e"/></svg>
<div class="cl" style="left:838px;top:290px"><span class="pn">userDetails</span>: Array(2)</div>
<svg class="a" style="left:841.4px;top:309.5px" width="5" height="6" viewBox="0 0 5 6"><path d="M0 0L5 3 0 6z" fill="#6e6e6e"/></svg>
<div class="cl" style="left:850px;top:306px"><span class="pn">0</span>: {name: <span class="st">"gura"</span>, emai…</div>
<svg class="a" style="left:841.4px;top:325.5px" width="5" height="6" viewBox="0 0 5 6"><path d="M0 0L5 3 0 6z" fill="#6e6e6e"/></svg>
<div class="cl" style="left:850px;top:322px"><span class="pn">1</span>: {name: <span class="st">"Guran"</span>, ema…</div>
<div class="cl" style="left:850px;top:338px"><span class="pl">length</span>: <span class="nm">2</span></div>
<svg class="a" style="left:841.4px;top:357.5px" width="5" height="6" viewBox="0 0 5 6"><path d="M0 0L5 3 0 6z" fill="#6e6e6e"/></svg>
<div class="cl" style="left:850px;top:354px"><span class="pl">__proto__</span>: Array(0)</div>
<svg class="a" style="left:829.5px;top:373.5px" width="5" height="6" viewBox="0 0 5 6"><path d="M0 0L5 3 0 6z" fill="#6e6e6e"/></svg>
<div class="cl" style="left:838px;top:370px"><span class="pl">__proto__</span>: Object</div>
<svg class="a" style="left:817px;top:389.5px" width="5" height="6" viewBox="0 0 5 6"><path d="M0 0L5 3 0 6z" fill="#6e6e6e"/></svg>
<div class="cl" style="left:826px;top:386px"><span class="pl">__proto__</span>: Object</div>
<svg class="a" style="left:788px;top:407px" width="6" height="9" viewBox="0 0 6 9"><path d="M1 .8l4 3.7-4 3.7" stroke="#1a73e8" stroke-width="1.4" fill="none"/></svg>
<!-- drawer -->
<div class="a" style="left:653px;top:639px;width:371px;height:1px;background:#cdcdcd"></div>
<div class="a" style="left:653px;top:640px;width:371px;height:26px;background:#f3f3f3"></div>
<div class="a" style="left:653px;top:666px;width:371px;height:1px;background:#cdcdcd"></div>
<svg class="a" style="left:667px;top:647px" width="5" height="14" viewBox="0 0 5 14"><circle cx="2.5" cy="2" r="1.5" fill="#6e6e6e"/><circle cx="2.5" cy="7" r="1.5" fill="#6e6e6e"/><circle cx="2.5" cy="12" r="1.5" fill="#6e6e6e"/></svg>
<div class="t" style="left:690px;top:648px;font-size:11.6px;color:#333">Console</div>
<div class="t" style="left:753px;top:649px;font-size:11.85px;color:#333">What's New</div>
<svg class="a" style="left:823px;top:651px" width="7" height="7" viewBox="0 0 7 7"><path d="M.5 .5l6 6M6.5 .5l-6 6" stroke="#333" stroke-width="1.2"/></svg>
<div class="a" style="left:743px;top:665px;width:93px;height:2px;background:#3a70d0"></div>
<svg class="a" style="left:1003px;top:649px" width="10" height="10" viewBox="0 0 10 10"><path d="M.5 .5l9 9M9.5 .5l-9 9" stroke="#6e6e6e" stroke-width="1.5"/></svg>
<div class="a" style="left:653px;top:667px;width:371px;height:27px;background:#f3f3f3"></div>
<div class="a" style="left:653px;top:694px;width:371px;height:1px;background:#e0e0e0"></div>
<div class="t" style="left:668px;top:675px;font-size:12.2px;color:#222">Highlights from the Chrome 76 update</div>
<div class="t" style="left:671px;top:714px;font-size:13.75px;color:#222">Autocomplete with CSS keyword values</div>
<div class="a" style="left:1007px;top:695px;width:17px;height:33px;background:#f1f1f1"></div>
<div class="t" style="left:1011px;top:699px;font-size:7px;color:#a3a3a3">▲</div>
<div class="t" style="left:1011px;top:715px;font-size:7px;color:#505050">▼</div>
<div class="a" style="left:1004px;top:714px;width:3px;height:14px;background:#1a73e8"></div>
<!-- windows watermark -->
<div class="t" style="left:747px;top:634px;font-size:19.8px;color:rgba(140,140,140,0.5)">Активация Windows</div>
<div class="t" style="left:747px;top:658px;font-size:14.9px;color:rgba(140,140,140,0.5)">Чтобы активировать Windows,</div>
<div class="t" style="left:747px;top:679px;font-size:14.9px;color:rgba(140,140,140,0.5)">перейдите в раздел "Параметры".</div>

<!-- ============ TASKBAR ============ -->
<div class="a" style="left:0;top:728px;width:1024px;height:40px;background:#0a0c10"></div>

<svg class="a" style="left:16px;top:740px" width="16" height="16" viewBox="0 0 16 16"><g fill="#fff"><path d="M0 2.3L6.6 1.3V7.5H0z"/><path d="M7.4 1.2L16 0V7.5H7.4z"/><path d="M0 8.4H6.6V14.7L0 13.7z"/><path d="M7.4 8.4H16V16L7.4 14.8z"/></g></svg>
<svg class="a" style="left:64px;top:740px" width="16" height="16" viewBox="0 0 16 16"><circle cx="9.8" cy="6.2" r="5" stroke="#fff" stroke-width="1.3" fill="none"/><path d="M6.2 9.8L.8 15.2" stroke="#fff" stroke-width="1.5"/></svg>
<svg class="a" style="left:111px;top:740px" width="18" height="16" viewBox="0 0 18 16"><g stroke="#fff" stroke-width="1.2" fill="none"><path d="M0 .6h12M0 15.4h12"/><rect x="1.1" y="3.6" width="9.8" height="8.8"/><path d="M16.4 0v16"/></g><rect x="14.6" y="4" width="3.4" height="3.4" fill="#fff"/></svg>
<svg class="a" style="left:160px;top:737px" width="23" height="23" viewBox="0 0 23 23"><path d="M19.5 19.3A9.6 9.6 0 0 1 7 19.8Q3.5 17 3.5 12A8 8 0 0 1 19.6 10.5V13.3H8.7Q9.3 17 13.8 17.2Q17 17.2 19.5 15.4z M8.8 10.2H15.2Q14.8 7.2 12 7.2T8.8 10.2z" fill="#1f87e0" fill-rule="evenodd"/><path d="M1 12.5Q2 5 9.5 3.6Q4.8 6 4.2 11.5z" fill="#1f87e0"/></svg>
<svg class="a" style="left:209px;top:738px" width="22" height="20" viewBox="0 0 22 20"><path d="M0 2h8l2 2h12v15H0z" fill="#e8b43a"/><rect x="0" y="6" width="22" height="13" fill="#f5cd5a"/><rect x="6" y="11" width="10" height="4" fill="#2a8ad8"/><rect x="8" y="15" width="6" height="4" fill="#2a8ad8"/></svg>
<svg class="a" style="left:258px;top:737px" width="23" height="22" viewBox="0 0 23 22"><ellipse cx="11.5" cy="11" rx="11" ry="10.5" fill="#e3101e"/><ellipse cx="11.5" cy="11" rx="4.3" ry="7.5" fill="#0b0b0b"/></svg>
<svg class="a" style="left:310px;top:737px" width="16" height="22" viewBox="0 0 16 22"><path d="M0 0h11l5 5v17H0z" fill="#fff"/><path d="M11 0v5h5z" fill="#ccc"/></svg>
<svg class="a" style="left:354px;top:740px" width="25" height="17" viewBox="0 0 25 17"><path d="M0 4L12.5 0 25 4v13H0z" fill="#fff"/><path d="M0 4l12.5 7L25 4" stroke="#0b0b0b" stroke-width="1.5" fill="none"/><path d="M8 17l10-7" stroke="#0b0b0b" stroke-width="1.5"/></svg>
<svg class="a" style="left:403px;top:736px" width="25" height="25" viewBox="0 0 24 24"><path d="M17.5 0L24 3v18l-6.5 3L7 14l-4.5 3.5L0 16V8l2.5-1.5L7 10zM17.5 6.5L11 12l6.5 5.5z" fill="#1f9cf0"/></svg>
<div class="a" style="left:452px;top:736px;width:25px;height:25px;background:#fff"></div>
<svg class="a" style="left:459px;top:737px" width="11" height="23" viewBox="0 0 11 23"><path d="M5.5 1C9 5 10.5 8.5 10 12.5 9.5 16 7 18.5 5.5 19.5 4 18.5 1.5 16 1 12.5.5 8.5 2 5 5.5 1z" fill="#13aa52"/><path d="M5.5 19v4" stroke="#888" stroke-width="1"/></svg>
<div class="a" style="left:501px;top:736px;width:25px;height:25px;background:#fff"></div>
<svg class="a" style="left:508px;top:737px" width="11" height="23" viewBox="0 0 11 23"><path d="M5.5 1C9 5 10.5 8.5 10 12.5 9.5 16 7 18.5 5.5 19.5 4 18.5 1.5 16 1 12.5.5 8.5 2 5 5.5 1z" fill="#13aa52"/><path d="M5.5 19v4" stroke="#888" stroke-width="1"/></svg>
<svg class="a" style="left:552px;top:737px" width="23" height="23" viewBox="0 0 22 22"><circle cx="11" cy="11" r="11" fill="#3da5da"/><path d="M4.5 10.5l11-4.5-2 10-3-2.2-1.8 1.7.2-2.7 5-4.5-6.2 3.8z" fill="#fff"/></svg>
<div class="a" style="left:561px;top:750px;width:18px;height:11px;background:#e8262b;border-radius:2px"></div>
<div class="t" style="left:562px;top:752px;font-size:8px;color:#fff">163</div>
<div class="a" style="left:589px;top:728px;width:46px;height:40px;background:#2d2d2d"></div>
<svg class="a" style="left:601px;top:737px" width="22" height="22" viewBox="0 0 22 22"><circle cx="11" cy="11" r="11" fill="#db4437"/><path d="M11 11L1.5 5.5A11 11 0 0 0 11 22z" fill="#0f9d58"/><path d="M11 11V22A11 11 0 0 0 20.5 5.5z" fill="#ffcd40"/><path d="M11 6.5h9.5A11 11 0 0 0 1.5 5.5L6.3 13.7z" fill="#db4437"/><circle cx="11" cy="11" r="5" fill="#fff"/><circle cx="11" cy="11" r="4" fill="#4285f4"/></svg>
<!-- underlines -->
<div class="a" style="left:200px;top:766px;width:40px;height:2px;background:#76b9ed"></div>
<div class="a" style="left:249px;top:766px;width:40px;height:2px;background:#76b9ed"></div>
<div class="a" style="left:297px;top:766px;width:40px;height:2px;background:#76b9ed"></div>
<div class="a" style="left:345px;top:766px;width:41px;height:2px;background:#76b9ed"></div>
<div class="a" style="left:395px;top:766px;width:40px;height:2px;background:#76b9ed"></div>
<div class="a" style="left:444px;top:766px;width:41px;height:2px;background:#76b9ed"></div>
<div class="a" style="left:493px;top:766px;width:41px;height:2px;background:#76b9ed"></div>
<div class="a" style="left:543px;top:766px;width:41px;height:2px;background:#76b9ed"></div>
<div class="a" style="left:589px;top:766px;width:46px;height:2px;background:#76b9ed"></div>
<!-- tray -->
<svg class="a" style="left:764px;top:739px" width="18" height="17" viewBox="0 0 18 17"><circle cx="5.5" cy="8" r="3" stroke="#fff" stroke-width="1.1" fill="none"/><path d="M.5 16.5q0-5 5-5t5 5" stroke="#fff" stroke-width="1.1" fill="none"/><circle cx="12.5" cy="4" r="2.8" stroke="#fff" stroke-width="1.1" fill="none"/><path d="M9.5 9q1-2 3-2 4 0 5 5" stroke="#fff" stroke-width="1.1" fill="none"/></svg>
<svg class="a" style="left:803px;top:743px" width="13" height="8" viewBox="0 0 13 8"><path d="M.7 7.3L6.5 1.5l5.8 5.8" stroke="#fff" stroke-width="1.3" fill="none"/></svg>
<svg class="a" style="left:828px;top:740px" width="15" height="15" viewBox="0 0 15 15"><g stroke="#fff" stroke-width="1.1" fill="none"><path d="M1 14.5A12.5 12.5 0 0 1 13.5 2" opacity=".55"/><path d="M4.5 14.5A9 9 0 0 1 13.5 5.5"/><path d="M8 14.5A5.5 5.5 0 0 1 13.5 9"/></g><circle cx="12.8" cy="13.8" r="1.3" fill="#fff"/></svg>
<svg class="a" style="left:848px;top:739px" width="18" height="16" viewBox="0 0 18 16"><path d="M1 5h3l5-4v14l-5-4H1z" stroke="#fff" stroke-width="1.1" fill="none"/><path d="M12 5q2 3 0 6M14.5 3q3.5 5 0 10" stroke="#fff" stroke-width="1.1" fill="none"/></svg>
<div class="t" style="left:876px;top:742px;font-size:11px;color:#fff">РУС</div>
<div class="t" style="left:923px;top:732px;font-size:10.6px;color:#fff">12:16</div>
<div class="t" style="left:912px;top:750px;font-size:10.5px;color:#fff">13.09.2019</div>
<svg class="a" style="left:982px;top:738px" width="25" height="25" viewBox="0 0 25 25"><path d="M1 1h17v13H8l-4 4v-4H1z" fill="#fff"/><path d="M4 4.5h11M4 7.5h11M4 10.5h8" stroke="#0b0b0b" stroke-width="1.2"/><circle cx="16.5" cy="16.5" r="7" fill="#0b0b0b" stroke="#fff" stroke-width="1.3"/><text x="16.5" y="20.3" font-size="10" fill="#fff" text-anchor="middle" font-family="Liberation Sans" font-weight="bold">1</text></svg>
</body></html>
